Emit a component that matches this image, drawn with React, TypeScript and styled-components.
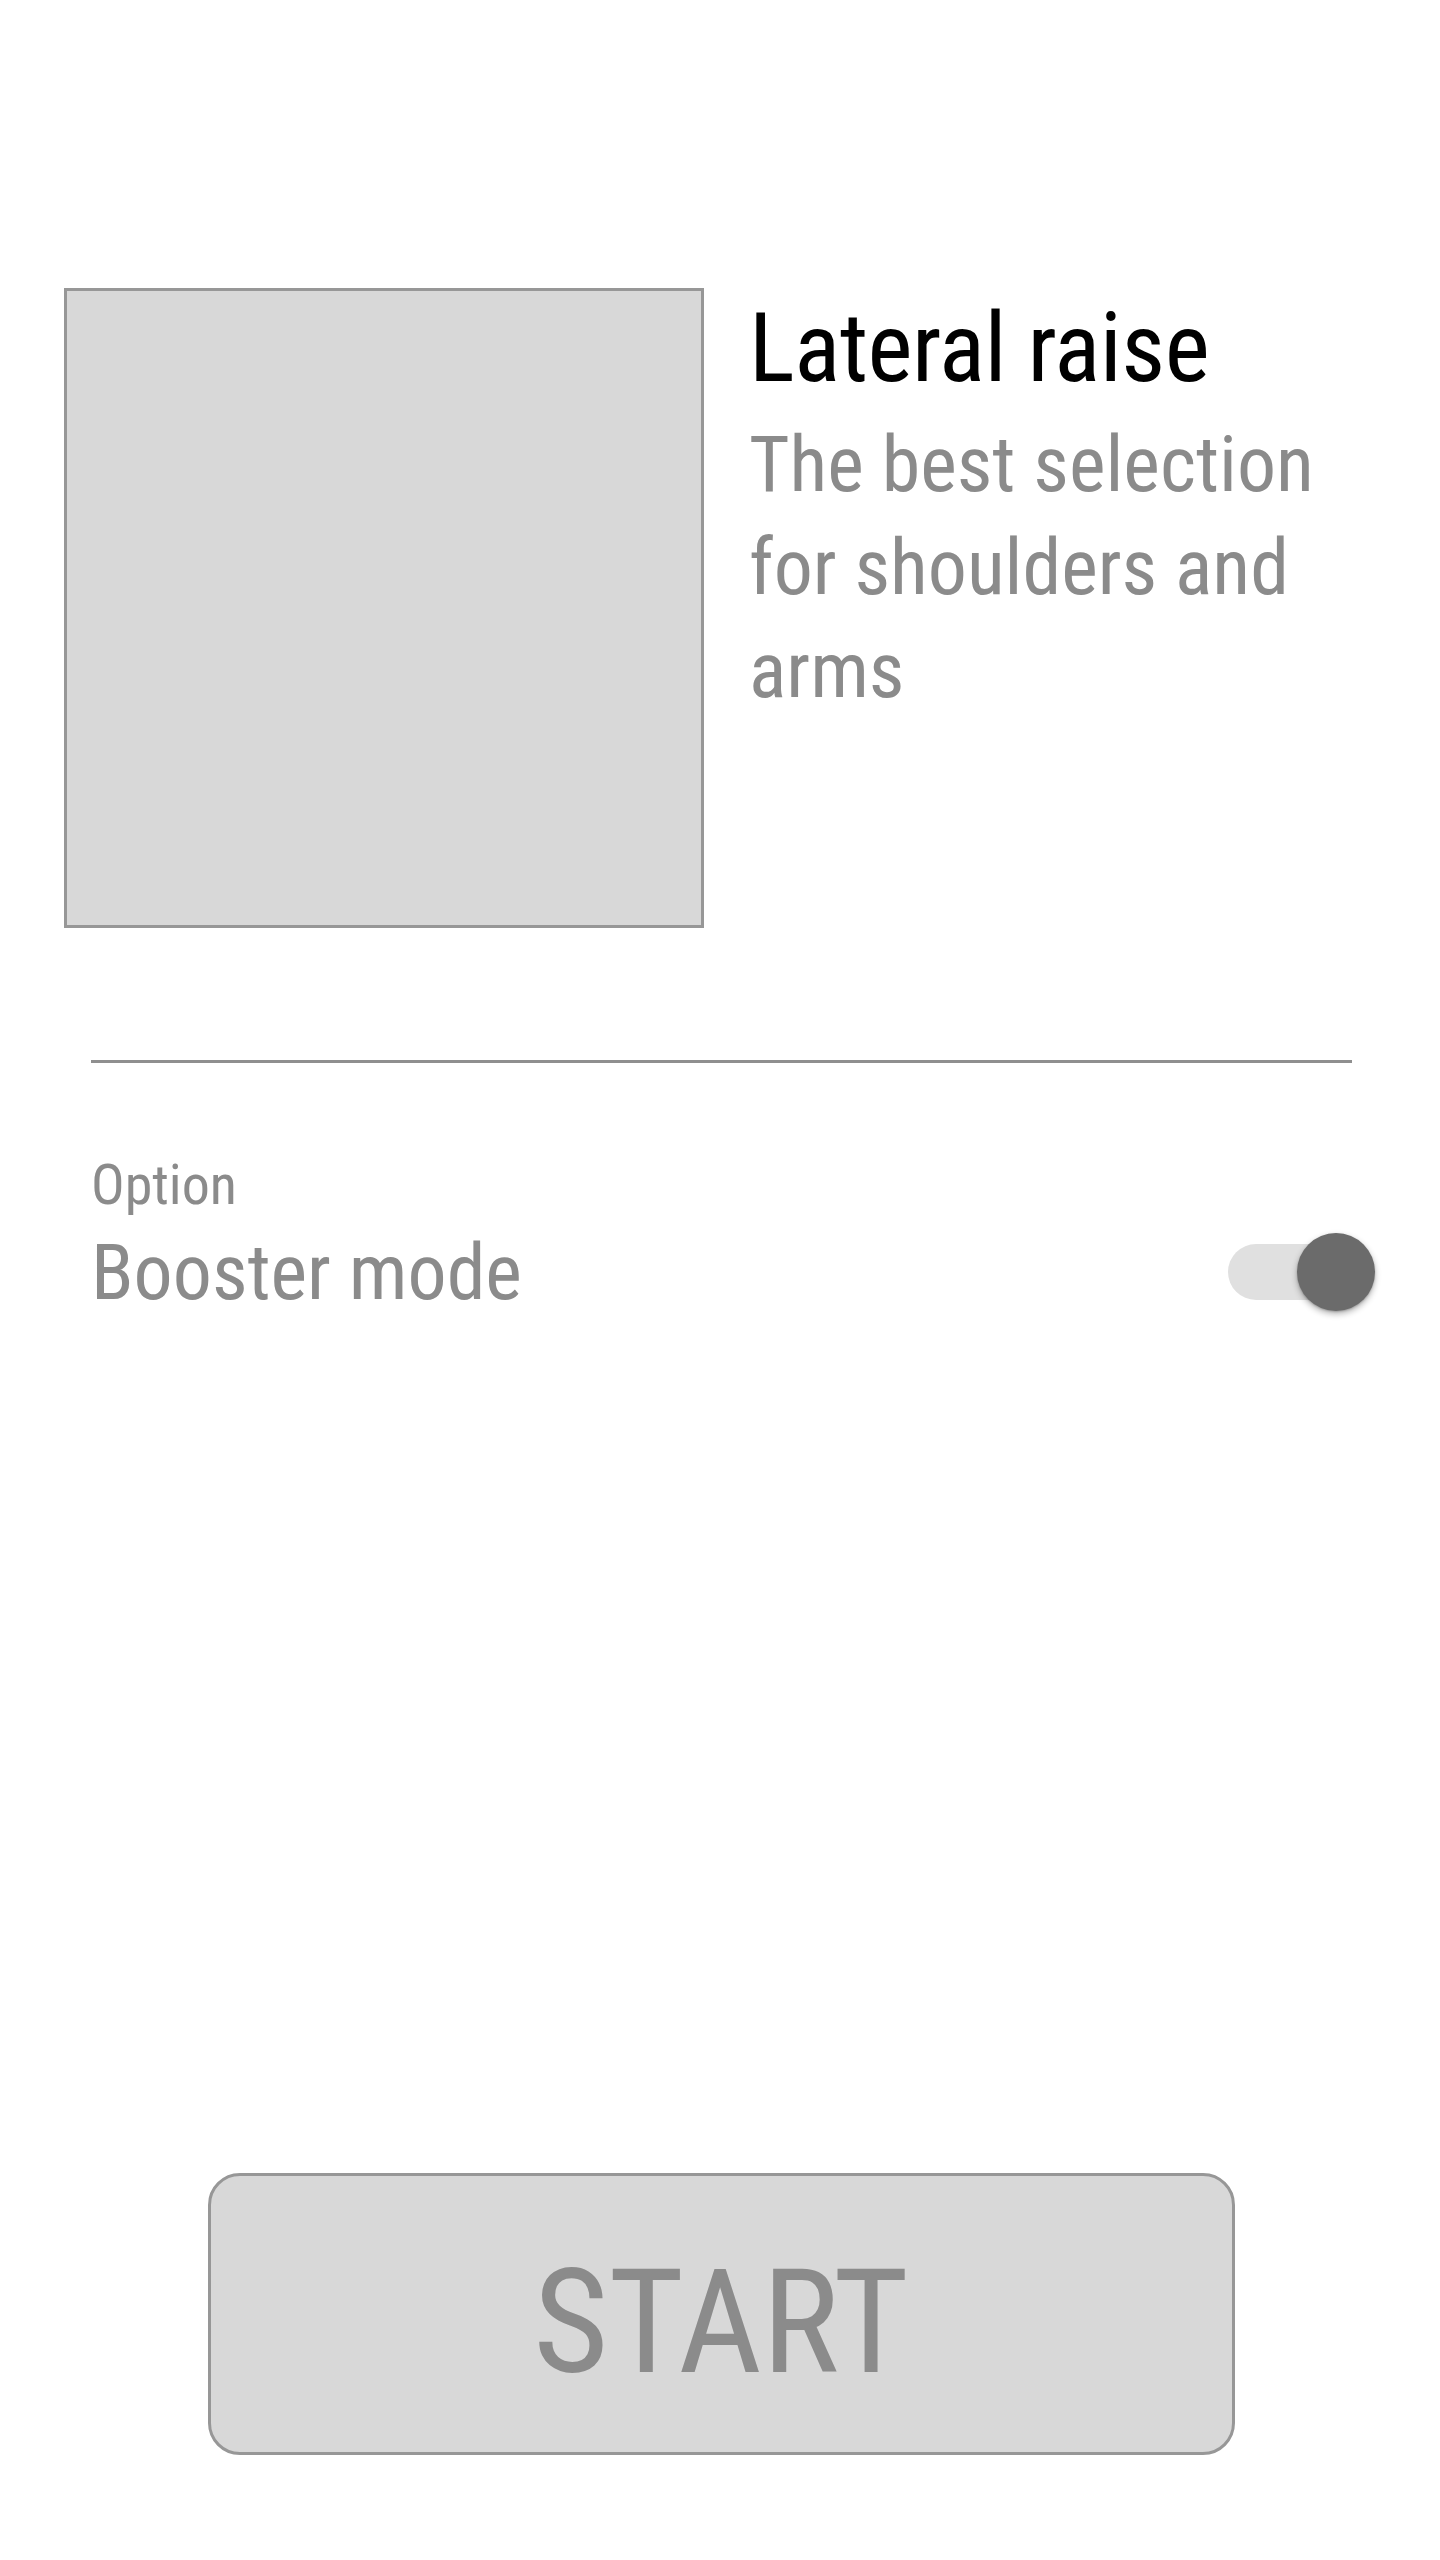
import React from "react";
import styled, { createGlobalStyle } from "styled-components";

const Global = createGlobalStyle`
  html, body { margin: 0; padding: 0; background: #ffffff; }
  body { font-family: "Roboto Condensed", Roboto, "Liberation Sans", sans-serif; }
`;

const Page = styled.div`
  width: 1440px;
  height: 2560px;
  display: flex;
  flex-direction: column;
  box-sizing: border-box;
`;

const Header = styled.section`
  display: flex;
  padding: 288px 64px 0 64px;
`;

const Thumb = styled.div`
  width: 640px;
  height: 640px;
  flex: none;
  box-sizing: border-box;
  background: #d8d8d8;
  border: 3px solid #979797;
`;

const Info = styled.div`
  display: flex;
  flex-direction: column;
  margin-left: 45px;
  flex: 1;
`;

const Title = styled.h1`
  margin: 4px 0 0 0;
  font-size: 96px;
  font-weight: 400;
  line-height: 1.172;
  color: #000;
  letter-spacing: -0.5px;
`;

const Desc = styled.p`
  margin: 8px 0 0 0;
  font-size: 78px;
  line-height: 103px;
  color: #8b8b8b;
`;

const Divider = styled.hr`
  margin: 132px 88px 0 91px;
  border: none;
  height: 3px;
  background: #8f8f8f;
`;

const OptionSection = styled.section`
  display: flex;
  flex-direction: column;
  padding: 90px 65px 0 91px;
`;

const OptionLabel = styled.div`
  font-size: 56px;
  line-height: 1.172;
  color: #8b8b8b;
`;

const OptionRow = styled.div`
  display: flex;
  align-items: center;
  justify-content: space-between;
  margin-top: 8px;
`;

const OptionName = styled.div`
  font-size: 78px;
  line-height: 1.172;
  color: #8b8b8b;
`;

const SwitchTrack = styled.div<{ $on: boolean }>`
  position: relative;
  width: 147px;
  height: 78px;
  display: flex;
  align-items: center;
  justify-content: ${(p) => (p.$on ? "flex-end" : "flex-start")};
  cursor: pointer;
  &::before {
    content: "";
    position: absolute;
    left: 0;
    right: 17px;
    top: 11px;
    height: 56px;
    border-radius: 28px;
    background: #e0e0e0;
  }
`;

const SwitchKnob = styled.div`
  position: relative;
  width: 78px;
  height: 78px;
  border-radius: 50%;
  background: #6b6b6b;
  box-shadow: 0 3px 6px rgba(0, 0, 0, 0.3), 0 1px 2px rgba(0, 0, 0, 0.2);
`;

const Spacer = styled.div`
  flex: 1;
`;

const StartButton = styled.button`
  align-self: center;
  width: 1027px;
  height: 282px;
  margin: 0 0 105px 2px;
  box-sizing: border-box;
  border: 3px solid #979797;
  border-radius: 32px;
  background: #d8d8d8;
  color: #8b8b8b;
  font-family: "Roboto Condensed", Roboto, sans-serif;
  font-size: 145px;
  line-height: 1;
  padding: 17px 0 0 0;
  display: flex;
  align-items: center;
  justify-content: center;
  cursor: pointer;
`;

export default function App() {
  const [booster, setBooster] = React.useState(true);
  return (
    <>
      <Global />
      <Page>
        <Header>
          <Thumb />
          <Info>
            <Title>Lateral raise</Title>
            <Desc>The best selection for shoulders and arms</Desc>
          </Info>
        </Header>
        <Divider />
        <OptionSection>
          <OptionLabel>Option</OptionLabel>
          <OptionRow>
            <OptionName>Booster mode</OptionName>
            <SwitchTrack $on={booster} onClick={() => setBooster(!booster)}>
              <SwitchKnob />
            </SwitchTrack>
          </OptionRow>
        </OptionSection>
        <Spacer />
        <StartButton>START</StartButton>
      </Page>
    </>
  );
}
